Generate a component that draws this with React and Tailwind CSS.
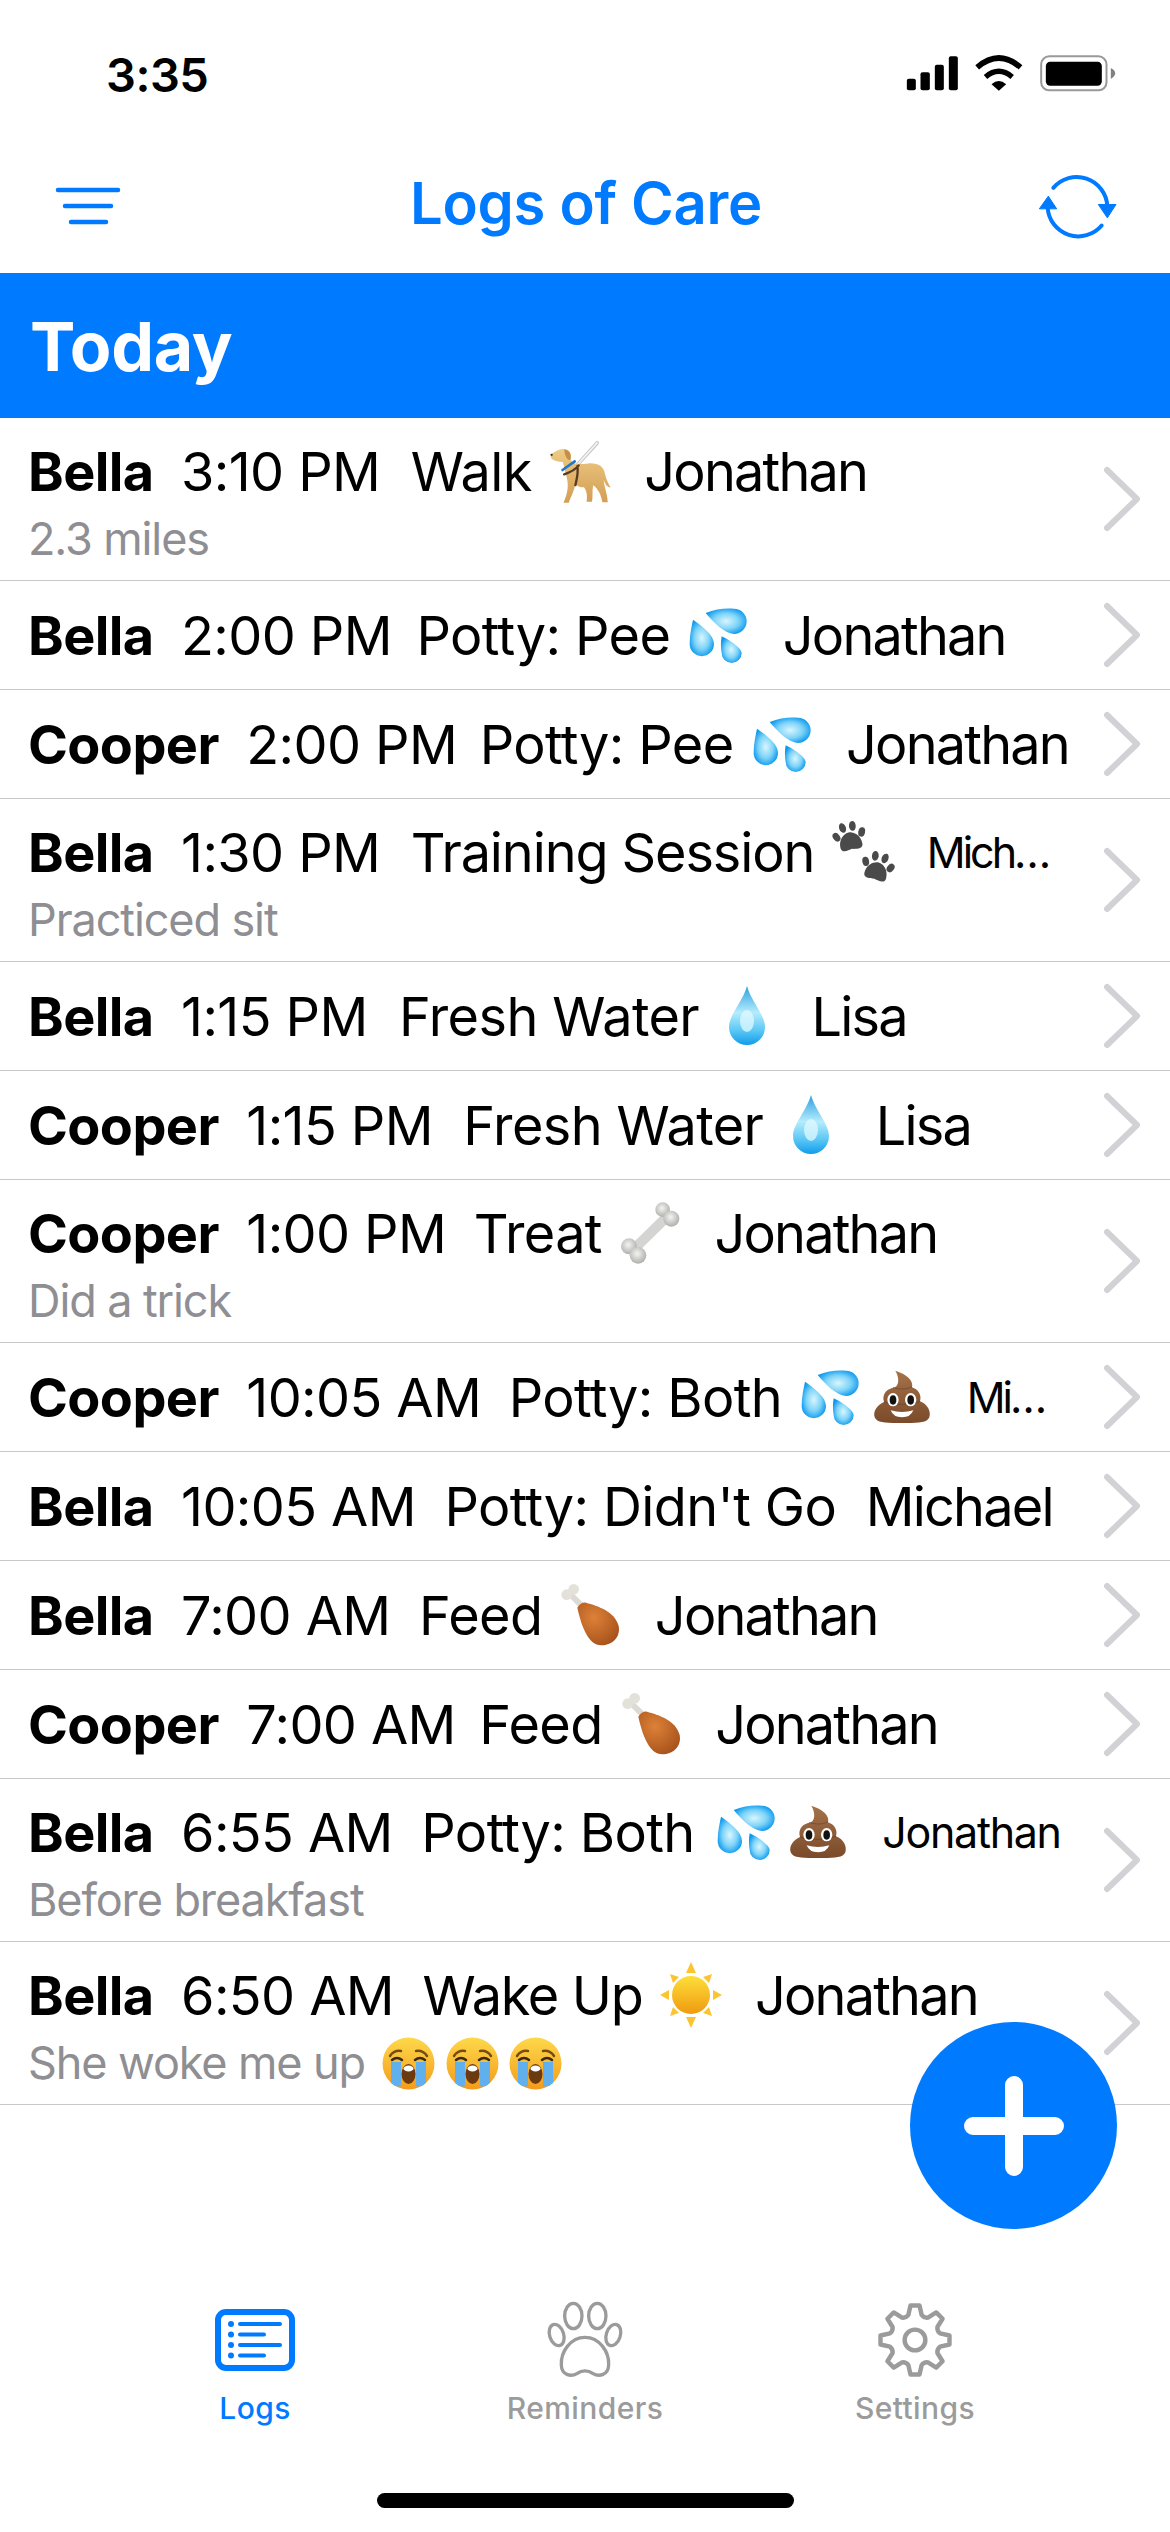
import React from "react";

const F = { fontFamily: "Inter, 'Liberation Sans', sans-serif" };

function gearPath() {
  const cx = 50, cy = 50, n = 8;
  const ro = 47, ri = 35;
  let d = "";
  for (let i = 0; i < n; i++) {
    const a = (i * 2 * Math.PI) / n - Math.PI / 2;
    const pt = (r, o) => {
      const x = cx + r * Math.cos(a + o);
      const y = cy + r * Math.sin(a + o);
      return `${x.toFixed(2)} ${y.toFixed(2)}`;
    };
    d += `${i === 0 ? "M" : "L"}${pt(ri, -0.26)} L${pt(ro, -0.13)} L${pt(ro, 0.13)} L${pt(ri, 0.26)} `;
    d += `Q${pt(ri - 3, Math.PI / n)} ${pt(ri, (2 * Math.PI) / n - 0.26)} `;
  }
  return d + "Z";
}

function Defs() {
  return (
    <svg className="absolute w-0 h-0" aria-hidden="true">
      <defs>
        <radialGradient id="dropG" cx="50%" cy="50%" r="55%">
          <stop offset="0%" stopColor="#d9f6ff" />
          <stop offset="55%" stopColor="#7fd4f8" />
          <stop offset="100%" stopColor="#0b98ef" />
        </radialGradient>
        <linearGradient id="waterG" x1="0" y1="0" x2="0" y2="1">
          <stop offset="0%" stopColor="#2a9fe0" />
          <stop offset="45%" stopColor="#b5ecfd" />
          <stop offset="75%" stopColor="#5cc8f5" />
          <stop offset="100%" stopColor="#109ceb" />
        </linearGradient>
        <linearGradient id="poopG" x1="0" y1="0" x2="0" y2="1">
          <stop offset="0%" stopColor="#a5734a" />
          <stop offset="100%" stopColor="#7a4a2a" />
        </linearGradient>
        <radialGradient id="boneG" cx="45%" cy="40%" r="65%">
          <stop offset="0%" stopColor="#f4f4f2" />
          <stop offset="100%" stopColor="#a9a9a6" />
        </radialGradient>
        <radialGradient id="meatG" cx="40%" cy="35%" r="75%">
          <stop offset="0%" stopColor="#dd8138" />
          <stop offset="100%" stopColor="#a4501a" />
        </radialGradient>
        <linearGradient id="dogG" x1="0" y1="0" x2="0" y2="1">
          <stop offset="0%" stopColor="#eecb84" />
          <stop offset="100%" stopColor="#d39d55" />
        </linearGradient>
        <linearGradient id="sunG" x1="0" y1="0" x2="0" y2="1">
          <stop offset="0%" stopColor="#fddf3a" />
          <stop offset="100%" stopColor="#f09a10" />
        </linearGradient>
        <linearGradient id="cryG" x1="0" y1="0" x2="0" y2="1">
          <stop offset="0%" stopColor="#fdd94a" />
          <stop offset="100%" stopColor="#f59a1c" />
        </linearGradient>
      </defs>
    </svg>
  );
}

const Box = ({ vb = "0 0 66 66", size = 66, children }) => (
  <svg width={size} height={size} viewBox={vb} className="shrink-0 block">
    {children}
  </svg>
);

const Dog = () => (
  <Box vb="70 25 200 200">
    <path d="M163 105 L222 40" stroke="#bdbdbd" strokeWidth="11" strokeLinecap="round" />
    <path d="M163 105 L222 40" stroke="#f2f2f2" strokeWidth="6" strokeLinecap="round" />
    <path
      d="M84 73 C96 64 108 58 124 58 C140 60 146 74 142 92 C150 108 172 104 195 102 C225 100 243 112 246 135 C250 152 256 164 263 175 C252 174 246 164 242 152 C242 170 254 195 254 220 L238 220 C234 198 226 180 210 168 C206 185 210 205 206 218 L190 218 C193 200 190 184 182 174 C172 176 162 172 156 164 C152 188 140 208 136 221 L120 221 C131 196 136 174 131 150 C126 132 122 112 118 98 C108 98 92 95 84 88 C80 82 80 77 84 73Z"
      fill="url(#dogG)"
    />
    <path d="M122 60 C136 60 146 74 140 92 C132 92 124 82 122 60Z" fill="#c58f4b" />
    <circle cx="84" cy="76" r="3.5" fill="#3a2a20" />
    <path d="M117 122 L154 96" stroke="#1f79c9" strokeWidth="8" strokeLinecap="round" />
    <path d="M122 135 C138 130 155 122 166 108 M162 110 C166 130 160 150 156 168" fill="none" stroke="#5a3b22" strokeWidth="7" strokeLinecap="round" />
  </Box>
);

const Sweat = () => (
  <Box vb="58 52 198 198">
    <path d="M120 85 C150 72 180 70 205 72 A38 38 0 0 1 205 148 C175 145 145 115 120 85Z" fill="url(#dropG)" />
    <path d="M82 105 C110 125 145 150 145 178 A36 36 0 0 1 72 178 C72 150 78 125 82 105Z" fill="url(#dropG)" />
    <path d="M168 155 C190 165 228 190 228 205 A30 30 0 0 1 168 205 C165 190 165 170 168 155Z" fill="url(#dropG)" />
  </Box>
);

const Poop = () => (
  <Box vb="273 48 198 198">
    <path
      d="M352 68 C385 78 408 98 402 118 C420 124 432 140 426 160 C448 168 460 190 454 208 C446 226 420 225 372 225 C324 225 298 226 290 208 C284 190 298 170 318 162 C312 142 322 126 342 120 C365 118 365 90 352 68Z"
      fill="url(#poopG)"
    />
    <path d="M345 118 C365 125 385 125 402 116 M318 162 C350 172 395 172 426 160" fill="none" stroke="#5e3820" strokeWidth="3" opacity="0.5" />
    <ellipse cx="345" cy="155" rx="17" ry="20" fill="#fff" />
    <ellipse cx="398" cy="155" rx="17" ry="20" fill="#fff" />
    <ellipse cx="345" cy="156" rx="10" ry="14" fill="#111" />
    <ellipse cx="398" cy="156" rx="10" ry="14" fill="#111" />
    <path d="M338 187 Q372 197 406 187 Q398 208 372 208 Q346 208 338 187Z" fill="#fff" />
  </Box>
);

const Paws = () => {
  const P = ({ x, y, r }) => (
    <g transform={`translate(${x} ${y}) rotate(${r}) scale(1.12)`} fill="#4a4a4a">
      <path d="M-10 6 C-10 -2 -4 -6 0 -6 C4 -6 10 -2 10 6 C10 11 4 10 0 9 C-4 10 -10 11 -10 6Z" />
      <ellipse cx="-11.5" cy="-4" rx="3" ry="4.2" transform="rotate(-25 -11.5 -4)" />
      <ellipse cx="-4.5" cy="-11" rx="3" ry="4.4" transform="rotate(-8 -4.5 -11)" />
      <ellipse cx="4.5" cy="-11" rx="3" ry="4.4" transform="rotate(8 4.5 -11)" />
      <ellipse cx="11.5" cy="-4" rx="3" ry="4.2" transform="rotate(25 11.5 -4)" />
    </g>
  );
  return (
    <Box>
      <P x={21} y={20} r={-12} />
      <P x={48} y={50} r={15} />
    </Box>
  );
};

const Water = () => (
  <Box>
    <path d="M33 3 C37 18 51 32 51 44 A18 18 0 0 1 15 44 C15 32 29 18 33 3Z" fill="url(#waterG)" />
    <ellipse cx="33" cy="38" rx="7" ry="11" fill="#e2f9ff" opacity="0.75" />
  </Box>
);

const Bone = () => (
  <Box vb="71 21 198 198">
    <path d="M130 160 L212 80" stroke="#d4d4d2" strokeWidth="30" strokeLinecap="round" />
    <circle cx="107" cy="160" r="24" fill="url(#boneG)" />
    <circle cx="134" cy="187" r="25" fill="url(#boneG)" />
    <circle cx="208" cy="50" r="22" fill="url(#boneG)" />
    <circle cx="234" cy="77" r="24" fill="url(#boneG)" />
  </Box>
);

const Drum = () => (
  <Box vb="43 38 198 198">
    <path d="M82 74 L116 108" stroke="#dcdad4" strokeWidth="18" />
    <circle cx="72" cy="76" r="16" fill="#e3e1da" />
    <circle cx="93" cy="60" r="16" fill="#e3e1da" />
    <path d="M104 115 C112 102 122 98 130 100 C165 110 216 125 228 170 C236 215 190 236 160 225 C130 210 114 160 104 115Z" fill="url(#meatG)" />
  </Box>
);

const Sun = () => (
  <Box>
    <g fill="#fbc531">
      <path d="M33 0 L38 11 H28Z" />
      <path d="M33 66 L38 55 H28Z" />
      <path d="M2 33 L11 28 V38Z" />
      <path d="M64 33 L55 28 V38Z" />
      <path d="M12 12 L21 15 L15 21Z" />
      <path d="M54 12 L45 15 L51 21Z" />
      <path d="M12 54 L21 51 L15 45Z" />
      <path d="M54 54 L45 51 L51 45Z" />
    </g>
    <circle cx="33" cy="33" r="19" fill="url(#sunG)" />
  </Box>
);

const Cry = () => (
  <Box size={53} vb="0 0 53 53">
    <circle cx="26.5" cy="26.5" r="26" fill="url(#cryG)" />
    <path d="M8 19 Q12 13 19 14 M34 14 Q41 13 45 19" fill="none" stroke="#7a4a12" strokeWidth="2.5" strokeLinecap="round" />
    <path d="M10 23 Q15 19 20 23 M33 23 Q38 19 43 23" fill="none" stroke="#3a2a10" strokeWidth="2.5" strokeLinecap="round" />
    <path d="M9 25 H19 V49 Q14 51 9 46Z" fill="#5fb0ec" />
    <path d="M34 25 H44 V46 Q39 51 34 49Z" fill="#5fb0ec" />
    <ellipse cx="26.5" cy="37" rx="7" ry="10" fill="#6b3a10" />
    <ellipse cx="26.5" cy="31.5" rx="5" ry="3" fill="#fff" />
  </Box>
);

const E = { dog: Dog, sweat: Sweat, poop: Poop, paws: Paws, water: Water, bone: Bone, drum: Drum, sun: Sun };

const big = "tracking-[-1.8px]";
const rows = [
  { n: "Bella", t: "3:10 PM", l: "Walk", lc: "ml-[3px]", e: ["dog"], b: "Jonathan", bc: big, s: "2.3 miles" },
  { n: "Bella", t: "2:00 PM", l: "Potty: Pee", lc: "-ml-[3px]", e: ["sweat"], b: "Jonathan", bc: big },
  { n: "Cooper", t: "2:00 PM", l: "Potty: Pee", lc: "-ml-[5px]", e: ["sweat"], b: "Jonathan", bc: big },
  { n: "Bella", t: "1:30 PM", l: "Training Session", lc: "ml-[3px] tracking-[-1.1px]", e: ["paws"], b: "Mich…", bc: "text-[43px] tracking-[-3px]", s: "Practiced sit" },
  { n: "Bella", t: "1:15 PM", l: "Fresh Water", lc: "ml-[4px]", e: ["water"], b: "Lisa", bc: big },
  { n: "Cooper", t: "1:15 PM", l: "Fresh Water", lc: "ml-[3px]", e: ["water"], b: "Lisa", bc: big },
  { n: "Cooper", t: "1:00 PM", l: "Treat", lc: "", e: ["bone"], b: "Jonathan", bc: big, s: "Did a trick" },
  { n: "Cooper", t: "10:05 AM", l: "Potty: Both", lc: "", e: ["sweat", "poop"], b: "Mi…", bc: "text-[43px] tracking-[-3px]" },
  { n: "Bella", t: "10:05 AM", l: "Potty: Didn't Go", lc: "ml-[1px] mr-[2px]", e: [], b: "Michael", bc: big },
  { n: "Bella", t: "7:00 AM", l: "Feed", lc: "ml-[1px]", e: ["drum"], b: "Jonathan", bc: big },
  { n: "Cooper", t: "7:00 AM", l: "Feed", lc: "-ml-[4px]", e: ["drum"], b: "Jonathan", bc: big },
  { n: "Bella", t: "6:55 AM", l: "Potty: Both", lc: "ml-[1px] mr-[3px]", e: ["sweat", "poop"], b: "Jonathan", bc: "text-[43px] tracking-[-1.3px]", s: "Before breakfast" },
  { n: "Bella", t: "6:50 AM", l: "Wake Up", lc: "ml-[1px] tracking-[-1.3px]", e: ["sun"], b: "Jonathan", bc: big, s: "She woke me up", cry: true },
];

function Row({ r }) {
  const two = !!r.s;
  return (
    <div className={`flex items-center border-b border-[#c8c8c8] pl-[28px] pr-[29px] ${two ? "h-[163px]" : "h-[109px]"}`}>
      <div className={`flex-1 min-w-0 self-start flex flex-col ${two ? "pt-[19px]" : "pt-[20px]"}`}>
        <div className="flex items-center h-[68px] whitespace-nowrap text-[54px] text-black gap-[27.5px] tracking-[-0.6px]">
          <span className="font-bold">{r.n}</span>
          <span>{r.t}</span>
          <span className={r.lc}>{r.l}</span>
          {r.e.length > 0 && (
            <span className="flex items-center gap-[6px] -ml-[12.5px] mr-[4px]">
              {r.e.map((e, i) => {
                const C = E[e];
                return <C key={i} />;
              })}
            </span>
          )}
          <span className={r.bc}>{r.b}</span>
        </div>
        {two && (
          <div className="flex items-center h-[56px] mt-[6px] text-[45px] text-[#8e8e93] whitespace-nowrap tracking-[-1.1px] gap-[17px]">
            <span>{r.s}</span>
            {r.cry && (
              <span className="flex items-center gap-[10.5px]">
                <Cry />
                <Cry />
                <Cry />
              </span>
            )}
          </div>
        )}
      </div>
      <svg width="38" height="66" viewBox="0 0 38 66" className="shrink-0">
        <path d="M4 4 L34 33 L4 62" fill="none" stroke="#d1d1d6" strokeWidth="6" strokeLinecap="round" strokeLinejoin="round" />
      </svg>
    </div>
  );
}

function StatusIcons() {
  return (
    <svg width="217" height="40" viewBox="70 100 650 120">
      <rect x="81" y="177" width="27" height="35" rx="6" />
      <rect x="122" y="158" width="28" height="54" rx="6" />
      <rect x="165" y="135" width="27" height="77" rx="6" />
      <rect x="207" y="110" width="27" height="102" rx="6" />
      <path d="M292 143 Q357 87 422 143" fill="none" stroke="#000" strokeWidth="17" />
      <path d="M317 172 Q357 138 397 172" fill="none" stroke="#000" strokeWidth="16" />
      <path d="M335 194 Q357 174 379 194 L357 213Z" />
      <rect x="484" y="110" width="196" height="102" rx="24" fill="none" stroke="#999" strokeWidth="6" />
      <rect x="498" y="126" width="168" height="72" rx="13" />
      <path d="M693 145 Q706 152 706 161 Q706 170 693 178Z" fill="#808080" />
    </svg>
  );
}

function App() {
  return (
    <div className="relative w-[1170px] h-[2532px] overflow-hidden bg-white flex flex-col" style={F}>
      <Defs />
      <div className="h-[130px] flex items-start justify-between pl-[106px] pr-[50px]">
        <span className="mt-[45px] text-[47px] leading-[60px] font-semibold text-black tracking-[-0.5px]">3:35</span>
        <div className="mt-[53px]"><StatusIcons /></div>
      </div>
      <div className="h-[143px] flex items-center justify-between pl-[55px] pr-[50px]">
        <svg width="66" height="40" viewBox="0 0 66 40" className="mt-[9px]">
          <g stroke="#007aff" strokeWidth="4.5" strokeLinecap="round">
            <path d="M3 4 H63" />
            <path d="M10 20 H56" />
            <path d="M16 36 H51" />
          </g>
        </svg>
        <span className="ml-[16px] mt-[3px] text-[58px] leading-[70px] font-semibold text-[#007aff] tracking-[-0.3px]">Logs of Care</span>
        <svg width="85" height="72" viewBox="465 455 255 215" className="mt-[10px]">
          <g fill="none" stroke="#007aff" strokeWidth="12" strokeLinecap="round">
            <path d="M520 505 A92 92 0 0 1 682 560" />
            <path d="M665 618 A92 92 0 0 1 503 565" />
          </g>
          <path d="M655 555 H708 L682 595Z" fill="#007aff" stroke="#007aff" strokeWidth="3" strokeLinejoin="round" />
          <path d="M478 568 H530 L505 530Z" fill="#007aff" stroke="#007aff" strokeWidth="3" strokeLinejoin="round" />
        </svg>
      </div>
      <div className="h-[145px] bg-[#007aff] flex items-center pl-[30px]">
        <span className="text-[68px] leading-[80px] font-bold text-white tracking-[-0.3px]">Today</span>
      </div>
      <div className="flex-1 flex flex-col">
        {rows.map((r, i) => (
          <Row key={i} r={r} />
        ))}
      </div>
      <div className="flex justify-center">
        <div className="w-[330px] flex flex-col items-center">
          <div className="h-[80px] flex items-center justify-center">
            <svg width="82" height="64" viewBox="0 0 82 64">
              <rect x="4" y="4" width="74" height="56" rx="8" fill="none" stroke="#007aff" strokeWidth="6" />
              <g fill="#007aff">
                <circle cx="17" cy="16" r="3" />
                <circle cx="17" cy="26.5" r="3" />
                <circle cx="17" cy="37" r="3" />
                <circle cx="17" cy="47.5" r="3" />
              </g>
              <g stroke="#007aff" strokeWidth="4" strokeLinecap="round">
                <path d="M26 16 H66" />
                <path d="M26 26.5 H50" />
                <path d="M26 37 H66" />
                <path d="M26 47.5 H50" />
              </g>
            </svg>
          </div>
          <span className="mt-[8px] h-[40px] text-[30px] leading-[40px] font-medium text-[#007aff] tracking-[0.4px]">Logs</span>
        </div>
        <div className="w-[330px] flex flex-col items-center">
          <div className="h-[80px] flex items-center justify-center">
            <svg width="83.3" height="80" viewBox="190 60 250 240" className="ml-[2px]">
              <g fill="none" stroke="#9b9b9b" strokeWidth="10">
                <ellipse cx="278" cy="108" rx="26" ry="38" />
                <ellipse cx="350" cy="108" rx="26" ry="38" />
                <ellipse cx="228" cy="165" rx="21" ry="33" transform="rotate(-18 228 165)" />
                <ellipse cx="398" cy="165" rx="21" ry="33" transform="rotate(18 398 165)" />
                <path d="M313 172 C270 172 240 215 242 255 C243 285 270 292 290 280 C303 270 323 270 336 280 C356 292 383 285 384 255 C386 215 356 172 313 172Z" />
              </g>
            </svg>
          </div>
          <span className="mt-[8px] h-[40px] text-[30px] leading-[40px] font-medium text-[#9b9b9b] tracking-[0.4px]">Reminders</span>
        </div>
        <div className="w-[330px] flex flex-col items-center">
          <div className="h-[80px] flex items-center justify-center">
            <svg width="74" height="74" viewBox="0 0 100 100">
              <path d={gearPath()} fill="none" stroke="#9b9b9b" strokeWidth="6" strokeLinejoin="round" />
              <circle cx="50" cy="50" r="14" fill="none" stroke="#9b9b9b" strokeWidth="6" />
            </svg>
          </div>
          <span className="mt-[8px] h-[40px] text-[30px] leading-[40px] font-medium text-[#9b9b9b] tracking-[0.4px]">Settings</span>
        </div>
      </div>
      <div className="h-[104px] flex items-start justify-center pt-[65px]">
        <div className="w-[417px] h-[15px] rounded-full bg-black" />
      </div>
      <div className="absolute left-[910px] top-[2022px] w-[207px] h-[207px] rounded-full bg-[#007aff] flex items-center justify-center">
        <svg width="100" height="100" viewBox="0 0 100 100">
          <path d="M50 9 V91 M9 50 H91" stroke="#fff" strokeWidth="18" strokeLinecap="round" />
        </svg>
      </div>
    </div>
  );
}

export default App;
